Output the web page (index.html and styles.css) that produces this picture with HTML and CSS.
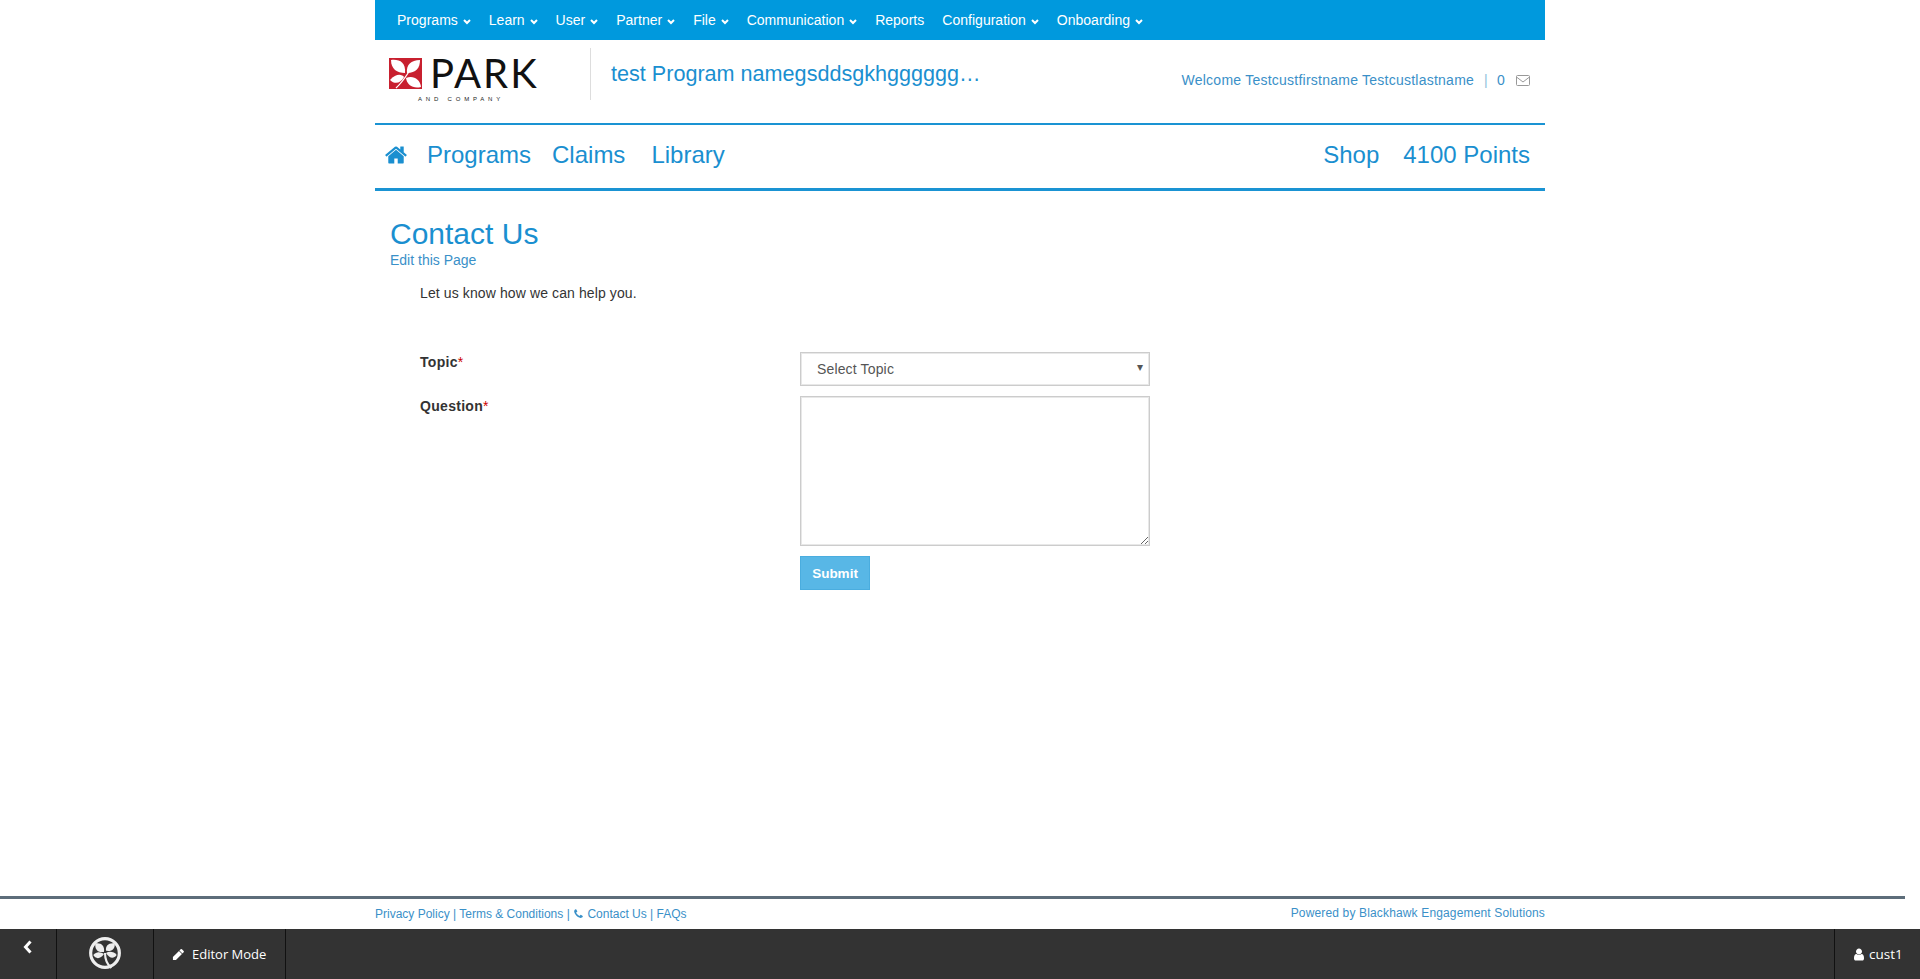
FILE: index.html
```html
<!DOCTYPE html>
<html lang="en">
<head>
    <meta charset="UTF-8">
    <title>Contact Us</title>
    <link rel="stylesheet" href="styles.css">
</head>
<body>
    <div class="page">
        <nav class="topnav">
            <a>Programs <svg class="caret" viewBox="0 0 8 6"><polyline points="1,1 4,4 7,1"/></svg></a>
            <a>Learn <svg class="caret" viewBox="0 0 8 6"><polyline points="1,1 4,4 7,1"/></svg></a>
            <a>User <svg class="caret" viewBox="0 0 8 6"><polyline points="1,1 4,4 7,1"/></svg></a>
            <a>Partner <svg class="caret" viewBox="0 0 8 6"><polyline points="1,1 4,4 7,1"/></svg></a>
            <a>File <svg class="caret" viewBox="0 0 8 6"><polyline points="1,1 4,4 7,1"/></svg></a>
            <a>Communication <svg class="caret" viewBox="0 0 8 6"><polyline points="1,1 4,4 7,1"/></svg></a>
            <a>Reports</a>
            <a>Configuration <svg class="caret" viewBox="0 0 8 6"><polyline points="1,1 4,4 7,1"/></svg></a>
            <a>Onboarding <svg class="caret" viewBox="0 0 8 6"><polyline points="1,1 4,4 7,1"/></svg></a>
        </nav>

        <header class="brand">
            <div class="logo">
                <svg class="logo-mark" viewBox="0 0 33 31">
                    <rect width="33" height="31" fill="#c8202f"/>
                    <path d="M2 2 C10 1 17 4 16 15 C8 15 2 11 2 2Z" fill="#fff"/>
                    <path d="M31 2 C31 10 27 15 18 15 C17 7 22 2 31 2Z" fill="#fff"/>
                    <path d="M1 22 C7 15 13 16 15 19 C12 25 6 27 1 22Z" fill="#fff"/>
                    <path d="M17 20 C24 17 31 21 32 29 C24 31 18 27 17 20Z" fill="#fff"/>
                    <path d="M24 8 C19 14 16 22 7 30" fill="none" stroke="#fff" stroke-width="1.300"/>
                </svg>
                <span class="logo-word">PARK</span>
                <span class="logo-sub">AND COMPANY</span>
            </div>
            <div class="program-name">test Program namegsddsgkhgggggg…</div>
            <div class="welcome">
                <span>Welcome Testcustfirstname Testcustlastname</span>
                <span class="pipe">|</span>
                <span>0</span>
                <svg class="mail" viewBox="0 0 14 11"><rect x="0.5" y="0.5" width="13" height="10" rx="1"/><polyline points="0.5,2 7,7 13.5,2"/></svg>
            </div>
        </header>

        <nav class="mainnav">
            <svg class="home" viewBox="0 0 1792 1792"><path d="M1472 992v480q0 26-19 45t-45 19h-384v-384h-256v384h-384q-26 0-45-19t-19-45v-480q0-1 .5-3t.5-3l575-474 575 474q1 2 1 6zm223-69l-62 74q-8 9-21 11h-3q-13 0-21-7l-692-577-692 577q-12 8-24 7-13-2-21-11l-62-74q-8-10-7-23.500t11-21.500l719-599q32-26 76-26t76 26l244 204v-195q0-14 9-23t23-9h192q14 0 23 9t9 23v408l219 182q10 8 11 21.500t-7 23.500z"/></svg>
            <a class="nav-programs">Programs</a>
            <a class="nav-claims">Claims</a>
            <a class="nav-library">Library</a>
            <a class="nav-shop">Shop</a>
            <a class="nav-points">4100 Points</a>
        </nav>

        <main class="content">
            <h1>Contact Us</h1>
            <a class="edit-link">Edit this Page</a>
            <p class="intro">Let us know how we can help you.</p>
            <form class="contact-form">
                <label class="field-label">Topic<span class="req">*</span></label>
                <div class="select-wrap">
                    <select><option>Select Topic</option></select>
                    <span class="select-arrow">▾</span>
                </div>
                <label class="field-label">Question<span class="req">*</span></label>
                <textarea></textarea>
                <span></span>
                <div><button type="button">Submit</button></div>
            </form>
        </main>
    </div>

    <footer class="footer">
        <div class="footer-inner">
            <div class="footer-links">
                Privacy Policy | Terms &amp; Conditions |
                <svg class="phone" viewBox="0 0 1792 1792"><path d="M1600 1240q0 27-10 70.500t-21 68.500q-21 50-122 106-94 51-186 51-27 0-53-3.500t-57.500-12.500-47-14.500-55.500-20.500-49-18q-98-35-175-83-127-79-264-216t-216-264q-48-77-83-175-3-9-18-49t-20.500-55.500-14.500-47-12.500-57.500-3.500-53q0-92 51-186 56-101 106-122 25-11 68.500-21t70.500-10q14 0 21 3 18 6 53 76 11 19 30 54t35 63.500 31 53.500q3 4 17.500 25t21.500 35.500 7 28.500q0 20-28.500 50t-62 55-62 53-28.500 46q0 9 5 22.500t8.500 20.500 14 24 11.500 19q76 137 174 235t235 174q2 1 19 11.500t24 14 20.500 8.500 22.500 5q18 0 46-28.500t53-62 55-62 50-28.500q14 0 28.500 7t35.500 21.500 25 17.500q25 15 53.500 31t63.500 35 54 30q70 35 76 53 3 7 3 21z"/></svg>
                Contact Us | FAQs
            </div>
            <div class="powered">Powered by Blackhawk Engagement Solutions</div>
        </div>
    </footer>

    <div class="adminbar">
        <div class="admin-back">
            <svg viewBox="0 0 10 14"><polyline points="7.500,1.500 2.500,7 7.500,12.500"/></svg>
        </div>
        <div class="admin-logo">
            <svg viewBox="0 0 32 32">
                <circle cx="16" cy="15" r="13.500" fill="none" stroke="#eee" stroke-width="3"/>
                <path d="M15 14 C9 15 6 11 7 6 C12 5 16 8 15 14Z" fill="#eee"/>
                <path d="M17 13 C16 8 20 5 25 6 C26 10 23 14 17 13Z" fill="#eee"/>
                <path d="M15 16 C12 21 7 21 5 17 C8 13 12 14 15 16Z" fill="#eee"/>
                <path d="M17 15 C20 13 25 14 27 17 C24 21 20 20 17 15Z" fill="#eee"/>
                <path d="M16 15 C16 20 17 25 22 29" fill="none" stroke="#eee" stroke-width="2"/>
            </svg>
        </div>
        <div class="admin-mode">
            <svg class="pencil" viewBox="0 0 1792 1792"><path d="M960 416l416 416-832 832H128v-416zM1643 512q0 53-37 90l-166 166-416-416 166-165q36-38 90-38 53 0 91 38l235 234q37 39 37 91z"/></svg>
            Editor Mode
        </div>
        <div class="admin-user">
            <svg class="user" viewBox="0 0 1792 1792"><path d="M1536 1399q0 109-62.500 187t-150.500 78h-854q-88 0-150.500-78t-62.500-187q0-85 8.500-160.500t31.500-152 58.500-131 94-89 134.500-34.500q131 128 313 128t313-128q76 0 134.500 34.500t94 89 58.500 131 31.500 152 8.500 160.500zm-256-887q0 159-112.500 271.500t-271.500 112.500-271.500-112.500-112.500-271.500 112.500-271.500 271.500-112.500 271.500 112.500 112.500 271.500z"/></svg>
            cust1
        </div>
    </div>
</body>
</html>
```

FILE: styles.css
```css
html, body {
    height: 100%;
}
body {
    margin: 0;
    display: flex;
    flex-direction: column;
    overflow: hidden;
    background: #fff;
    font-family: "Liberation Sans", Arial, sans-serif;
    font-size: 14px;
    color: #333;
}
.page {
    width: 1170px;
    margin-left: 375px;
    flex: 1;
}

/* top blue menu */
.topnav {
    height: 40px;
    background: #0099dd;
    display: flex;
    align-items: center;
    padding-left: 22px;
    gap: 18px;
    color: #fff;
    letter-spacing: 0.02px;
}
.caret {
    width: 8px;
    height: 6px;
    margin-left: 1px;
    vertical-align: 0;
}
.caret polyline {
    fill: none;
    stroke: #fff;
    stroke-width: 2;
}

/* logo row */
.brand {
    height: 83px;
    display: flex;
    align-items: flex-start;
    border-bottom: 2px solid #1a93d3;
}
.logo {
    width: 150px;
    margin: 17px 0 0 14px;
    display: grid;
    grid-template-columns: 33px auto;
    column-gap: 8px;
    height: 46px;
}
.logo-mark {
    width: 33px;
    height: 31px;
    margin-top: 1px;
}
.logo-word {
    font-family: "Lato", sans-serif;
    font-size: 40px;
    line-height: 33px;
    height: 33px;
    color: #111;
    letter-spacing: 2px;
}
.logo-sub {
    grid-column: 1 / 3;
    margin: 5px 0 0 29px;
    font-size: 6px;
    line-height: 7px;
    letter-spacing: 3.800px;
    color: #222;
    white-space: nowrap;
}
.program-name {
    margin: 8px 0 0 51px;
    padding-left: 20px;
    height: 52px;
    line-height: 52px;
    border-left: 1px solid #ddd;
    font-size: 21.600px;
    color: #1a8fd0;
}
.welcome {
    margin-left: auto;
    margin-right: 15px;
    margin-top: 31px;
    display: flex;
    align-items: center;
    color: #3a90c8;
    font-size: 14px;
    line-height: 18px;
    letter-spacing: 0.24px;
}
.pipe {
    margin: 0 9px 0 10px;
    color: #8fbfdc;
}
.mail {
    width: 14px;
    height: 11px;
    margin-left: 11px;
}
.mail rect, .mail polyline {
    fill: none;
    stroke: #999;
}

/* big nav */
.mainnav {
    height: 60px;
    padding-bottom: 3px;
    display: flex;
    align-items: center;
    border-bottom: 3px solid #1a93d3;
    font-size: 24px;
    color: #1a8fd0;
}
.home {
    width: 24px;
    height: 24px;
    margin-left: 9px;
    fill: #1a8fd0;
}
.nav-programs {
    margin-left: 19px;
}
.nav-claims {
    margin-left: 21px;
}
.nav-library {
    margin-left: 26px;
}
.nav-shop {
    margin-left: auto;
}
.nav-points {
    margin-left: 24px;
    margin-right: 15px;
}

/* page content */
.content {
    padding: 25px 0 0 15px;
}
h1 {
    margin: 0;
    font-size: 30px;
    font-weight: normal;
    line-height: 36px;
    color: #1a8fd0;
}
.edit-link {
    display: block;
    color: #3a90c8;
    line-height: 16px;
    font-size: 14px;
}
.intro {
    margin: 16px 0 0 30px;
    line-height: 18px;
    font-size: 14px;
    letter-spacing: 0.11px;
}
.contact-form {
    display: grid;
    grid-template-columns: 380px 350px;
    row-gap: 10px;
    margin: 50px 0 0 30px;
}
.field-label {
    font-weight: bold;
    font-size: 14px;
    line-height: 20px;
    letter-spacing: 0.3px;
}
.req {
    font-weight: normal;
    color: #c00;
}
.select-wrap {
    position: relative;
    height: 34px;
}
.select-wrap select {
    width: 100%;
    height: 34px;
    padding: 0 16px;
    border: 1px solid #ccc;
    box-shadow: inset 0 0 0 1px #e8e8e8;
    border-radius: 0;
    background: #fff;
    appearance: none;
    font-family: inherit;
    font-size: 14px;
    letter-spacing: 0.15px;
    color: #555;
}
.select-arrow {
    position: absolute;
    right: 7px;
    top: 8px;
    font-size: 12px;
    color: #555;
}
textarea {
    height: 150px;
    box-sizing: border-box;
    border: 1px solid #ccc;
    box-shadow: inset 0 0 0 1px #e8e8e8;
    border-radius: 0;
    margin: 0;
    display: block;
}
button {
    width: 70px;
    height: 34px;
    background: #58b7e6;
    color: #fff;
    border: 1px solid #4aaddf;
    font-family: inherit;
    font-size: 13.500px;
    font-weight: bold;
    padding: 0;
}

/* footer */
.footer {
    margin-right: 15px;
    height: 30px;
    border-top: 3px solid #5d6d7a;
    font-size: 12px;
    color: #3a90c8;
}
.footer-inner {
    width: 1170px;
    margin-left: 375px;
    display: flex;
    justify-content: space-between;
}
.footer-links {
    padding-top: 8px;
}
.powered {
    padding-top: 7px;
    letter-spacing: 0.15px;
}
.phone {
    width: 11px;
    height: 12px;
    vertical-align: -2px;
    fill: #3a90c8;
}

/* dark admin bar */
.adminbar {
    height: 50px;
    background: #333;
    display: flex;
    color: #fff;
    font-family: "Open Sans", sans-serif;
    font-size: 13px;
}
.adminbar > div {
    display: flex;
    align-items: center;
    box-sizing: border-box;
    border-right: 1px solid #111;
}
.admin-back {
    width: 57px;
    padding: 0 0 14px 23px;
}
.admin-back svg {
    width: 10px;
    height: 14px;
}
.admin-back polyline {
    fill: none;
    stroke: #fff;
    stroke-width: 3;
}
.admin-logo {
    width: 97px;
    justify-content: center;
}
.admin-logo svg {
    width: 34px;
    height: 34px;
}
.admin-mode {
    width: 132px;
    padding-left: 18px;
    gap: 7px;
}
.pencil {
    width: 13px;
    height: 13px;
    fill: #fff;
}
.adminbar > .admin-user {
    margin-left: auto;
    width: 86px;
    border-right: 0;
    border-left: 1px solid #111;
    padding-left: 17px;
    gap: 3px;
    font-size: 13.500px;
}
.user {
    width: 14px;
    height: 15px;
    fill: #fff;
}
```
